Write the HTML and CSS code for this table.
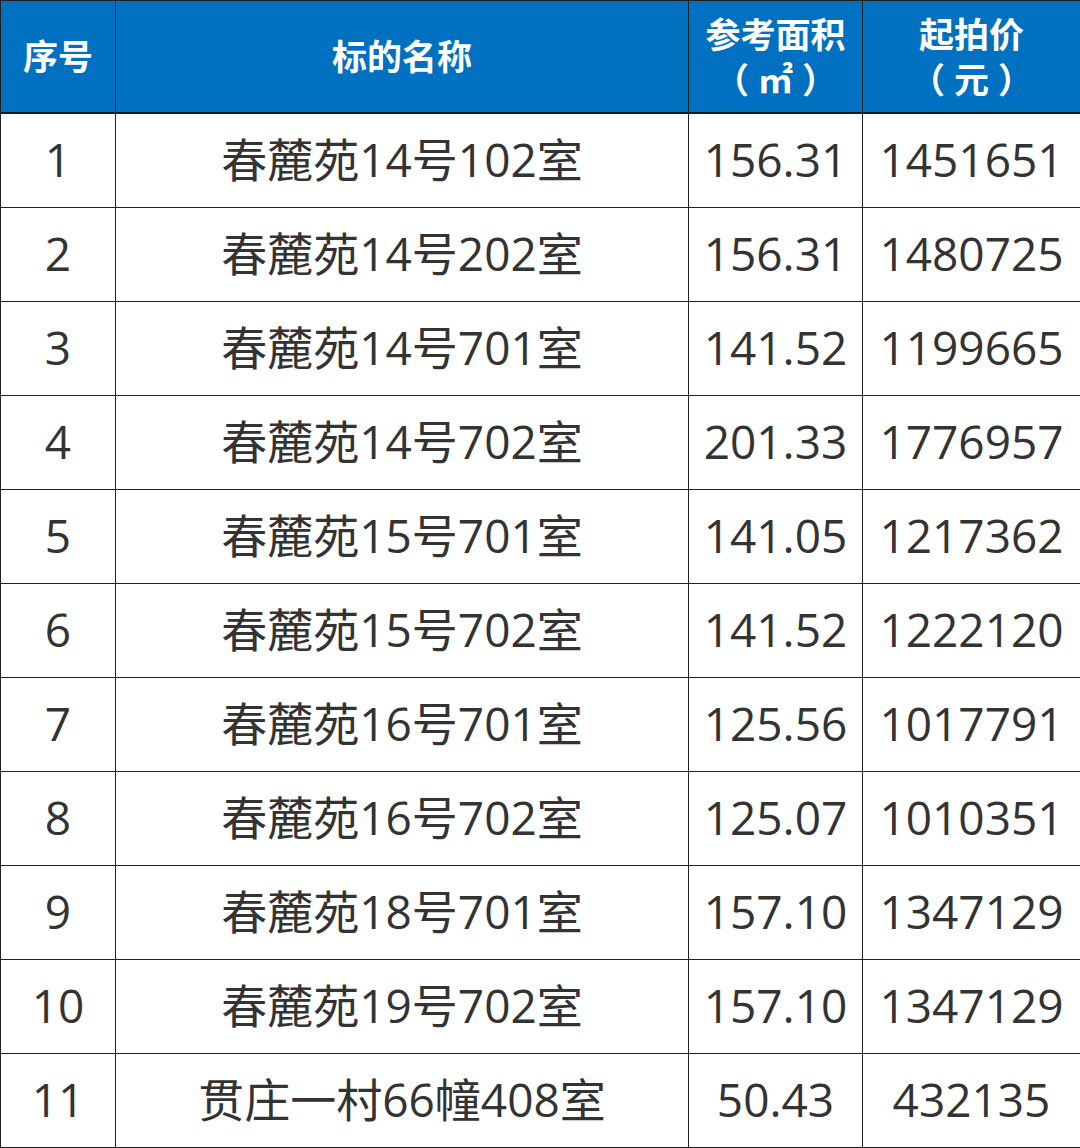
FILE: index.html
```html
<!DOCTYPE html>
<html lang="zh-CN">
<head>
<meta charset="utf-8">
<link rel="stylesheet" href="styles.css">
</head>
<body>
<table class="auction">
  <colgroup>
    <col class="c-no">
    <col class="c-name">
    <col class="c-area">
    <col class="c-price">
  </colgroup>
  <thead>
    <tr>
      <th>序号</th>
      <th>标的名称</th>
      <th>参考面积<br>（ ㎡ ）</th>
      <th>起拍价<br>（ 元 ）</th>
    </tr>
  </thead>
  <tbody>
    <tr><td>1</td><td>春麓苑14号102室</td><td>156.31</td><td>1451651</td></tr>
    <tr><td>2</td><td>春麓苑14号202室</td><td>156.31</td><td>1480725</td></tr>
    <tr><td>3</td><td>春麓苑14号701室</td><td>141.52</td><td>1199665</td></tr>
    <tr><td>4</td><td>春麓苑14号702室</td><td>201.33</td><td>1776957</td></tr>
    <tr><td>5</td><td>春麓苑15号701室</td><td>141.05</td><td>1217362</td></tr>
    <tr><td>6</td><td>春麓苑15号702室</td><td>141.52</td><td>1222120</td></tr>
    <tr><td>7</td><td>春麓苑16号701室</td><td>125.56</td><td>1017791</td></tr>
    <tr><td>8</td><td>春麓苑16号702室</td><td>125.07</td><td>1010351</td></tr>
    <tr><td>9</td><td>春麓苑18号701室</td><td>157.10</td><td>1347129</td></tr>
    <tr><td>10</td><td>春麓苑19号702室</td><td>157.10</td><td>1347129</td></tr>
    <tr><td>11</td><td>贯庄一村66幢408室</td><td>50.43</td><td>432135</td></tr>
  </tbody>
</table>
</body>
</html>
```

FILE: styles.css
```css
html, body {
  margin: 0;
  padding: 0;
  background: #ffffff;
}

.auction {
  width: 1080px;
  border-collapse: collapse;
  table-layout: fixed;
  font-family: "Open Sans", "Noto Sans CJK SC", sans-serif;
  color: #333333;
}

.c-no { width: 115px; }
.c-name { width: 573px; }
.c-area { width: 174px; }
.c-price { width: 218px; }

.auction th,
.auction td {
  border: 1px solid #222222;
  padding: 0;
  text-align: center;
  vertical-align: middle;
  white-space: nowrap;
  overflow: hidden;
}

.auction thead th {
  background: #0070c0;
  color: #ffffff;
  font-weight: 700;
  font-size: 35px;
  line-height: 45px;
  height: 111px;
  border-bottom: 2px solid #1a1a1a;
}

.auction tbody td {
  height: 89px;
  padding-bottom: 4px;
  font-size: 46px;
  line-height: 50px;
}
```
